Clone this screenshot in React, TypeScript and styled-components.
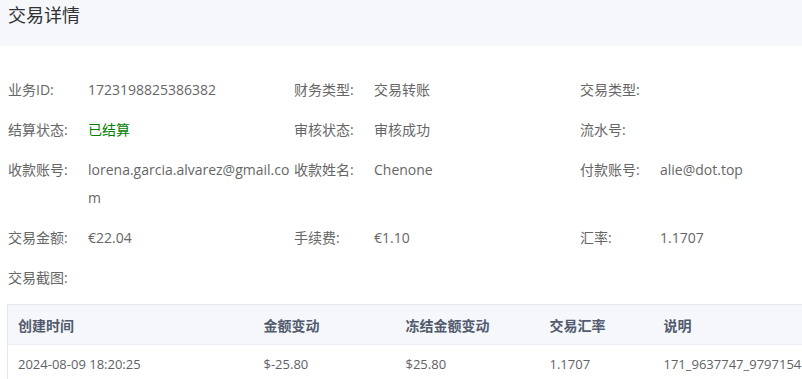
import styled, { createGlobalStyle } from 'styled-components';

const GlobalStyle = createGlobalStyle`
  html, body {
    margin: 0;
    padding: 0;
    background: #fff;
    overflow: hidden;
  }
  body {
    font-family: "Open Sans", "Noto Sans CJK SC", sans-serif;
    font-size: 14px;
    color: #606266;
  }
`;

type Field = { label: string; value?: string; tone?: 'success' };

const fields: Field[] = [
  { label: '业务ID:', value: '1723198825386382' },
  { label: '财务类型:', value: '交易转账' },
  { label: '交易类型:' },
  { label: '结算状态:', value: '已结算', tone: 'success' },
  { label: '审核状态:', value: '审核成功' },
  { label: '流水号:' },
  { label: '收款账号:', value: 'lorena.garcia.alvarez@gmail.com' },
  { label: '收款姓名:', value: 'Chenone' },
  { label: '付款账号:', value: 'alie@dot.top' },
  { label: '交易金额:', value: '€22.04' },
  { label: '手续费:', value: '€1.10' },
  { label: '汇率:', value: '1.1707' },
  { label: '交易截图:' },
];

const columns = [
  { title: '创建时间', width: 246 },
  { title: '金额变动', width: 142 },
  { title: '冻结金额变动', width: 144 },
  { title: '交易汇率', width: 114 },
  { title: '说明', width: 160 },
];

const rows = [['2024-08-09 18:20:25', '$-25.80', '$25.80', '1.1707', '171_9637747_9797154']];

const App = () => {
  return (
    <Page>
      <GlobalStyle />
      <Header>
        <Title>交易详情</Title>
      </Header>
      <Content>
        <InfoGrid>
          {fields.map((f) => (
            <InfoItem key={f.label}>
              <Label>{f.label}</Label>
              <Value $tone={f.tone}>{f.value}</Value>
            </InfoItem>
          ))}
        </InfoGrid>
        <Table>
          <colgroup>
            {columns.map((c) => (
              <col key={c.title} style={{ width: c.width }} />
            ))}
          </colgroup>
          <thead>
            <tr>
              {columns.map((c) => (
                <Th key={c.title}>{c.title}</Th>
              ))}
            </tr>
          </thead>
          <tbody>
            {rows.map((r) => (
              <tr key={r[4]}>
                {r.map((cell, i) => (
                  <Td key={i}>{cell}</Td>
                ))}
              </tr>
            ))}
          </tbody>
        </Table>
      </Content>
    </Page>
  );
};

const Page = styled.div`
  width: 802px;
  height: 379px;
  overflow: hidden;
`;

const Header = styled.div`
  height: 46px;
  padding: 0 8px;
  background: #f5f7fa;
`;

const Title = styled.h2`
  margin: 0;
  font-size: 18px;
  font-weight: 400;
  line-height: 30px;
  color: #303133;
`;

const Content = styled.div`
  padding: 30px 8px 0;
`;

const InfoGrid = styled.div`
  display: grid;
  grid-template-columns: repeat(3, 286px);
  row-gap: 12px;
  margin-bottom: 12px;
`;

const InfoItem = styled.div`
  display: flex;
  align-items: flex-start;
  line-height: 28px;
`;

const Label = styled.span`
  flex: 0 0 80px;
  color: #666;
`;

const Value = styled.span<{ $tone?: 'success' }>`
  flex: 0 0 206px;
  word-break: break-all;
  color: ${(p) => (p.$tone === 'success' ? '#008000' : '#666')};
`;

const Table = styled.table`
  margin-left: -1px;
  border-collapse: collapse;
  table-layout: fixed;
  width: 806px;
  border: 1px solid #e4e7ed;
`;

const Th = styled.th`
  box-sizing: border-box;
  height: 40px;
  padding: 0 10px;
  text-align: left;
  font-size: 14px;
  font-weight: 600;
  color: #515a6e;
  background: #f5f7fa;
  border-bottom: 1px solid #ebeef5;
  white-space: nowrap;
`;

const Td = styled.td`
  height: 38px;
  padding: 0 10px;
  font-size: 13px;
  color: #606266;
  white-space: nowrap;
`;

export default App;
